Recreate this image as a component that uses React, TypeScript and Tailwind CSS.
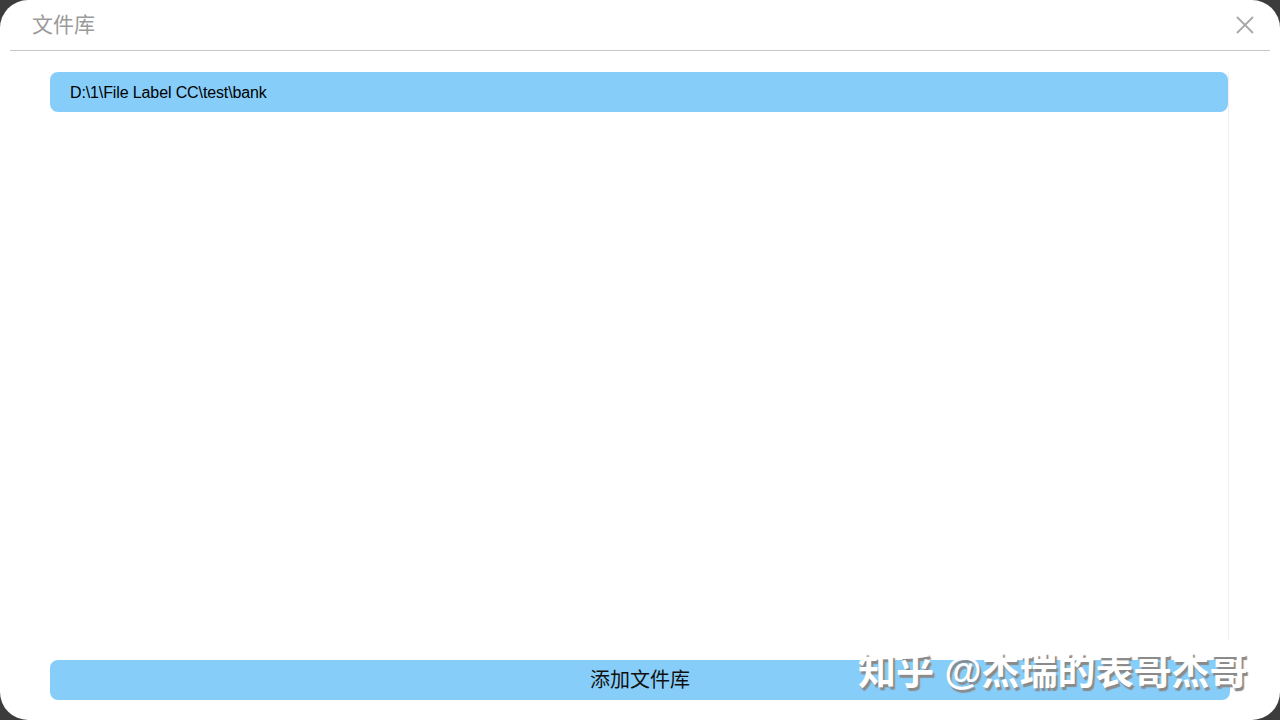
import React from "react"

const cjk = { fontFamily: '"Liberation Sans", "Noto Sans CJK SC", sans-serif' }

export default function App() {
  return (
    <main className="w-[1280px] h-[720px] bg-[#3c3c3c] overflow-hidden" style={cjk}>
      <div className="w-full h-full bg-white rounded-[28px] flex flex-col">
        {/* header */}
        <div className="h-[51px] mx-[10px] border-b border-[#c8c8c8] flex items-center justify-between pl-[22px] pr-[13px]">
          <h1 className="text-[21px] text-[#9a9a9a] font-normal">文件库</h1>
          <button className="w-[24px] h-[24px] flex items-center justify-center text-[#a8a8a8]">
            <svg width="20" height="20" viewBox="0 0 20 20" fill="none" stroke="currentColor" strokeWidth="1.8">
              <path d="M2 2 L18 18 M18 2 L2 18" />
            </svg>
          </button>
        </div>

        {/* list */}
        <div className="ml-[50px] mr-[51px] mt-[21px] h-[568px] border-r border-[#f0f0f0]">
          <div className="h-[40px] bg-[#87cdf9] rounded-[8px] flex items-center pl-[20px] pt-[1px] text-[16px] text-black tracking-[-0.12px]">
            D:\1\File Label CC\test\bank
          </div>
        </div>

        {/* bottom button */}
        <div className="relative mx-[50px] mt-[20px]">
          <button className="w-full h-[40px] bg-[#87cdf9] rounded-[8px] text-[20px] text-[#111]">
            添加文件库
          </button>
          <span className="absolute left-[808px] top-[-14px] text-[38px] font-semibold text-white whitespace-nowrap leading-[50px] [text-shadow:2px_3px_1px_#8a8a8a]">
            知乎 @杰瑞的表哥杰哥
          </span>
        </div>
      </div>
    </main>
  )
}
